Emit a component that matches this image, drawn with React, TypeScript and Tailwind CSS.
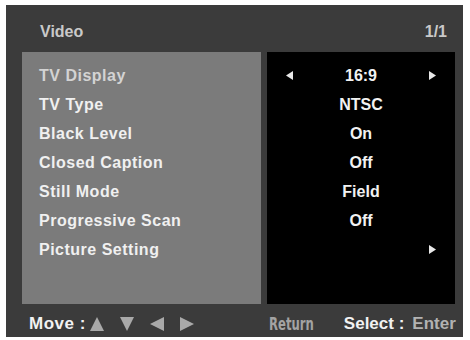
import React from 'react';

const rows = [
  { label: "TV Display", value: "16:9", left: true, right: true, dim: true },
  { label: "TV Type", value: "NTSC" },
  { label: "Black Level", value: "On" },
  { label: "Closed Caption", value: "Off" },
  { label: "Still Mode", value: "Field" },
  { label: "Progressive Scan", value: "Off" },
  { label: "Picture Setting", value: "", right: true },
];

const SmallArrow = ({ dir, show = true }: { dir: "left" | "right"; show?: boolean }) => (
  <svg width="7" height="9" viewBox="0 0 7 9" className={show ? "" : "invisible"}>
    {dir === "left" ? <polygon points="7,0 7,9 0,4.5" fill="#e8e8e8" /> : <polygon points="0,0 0,9 7,4.5" fill="#e8e8e8" />}
  </svg>
);

const NavTri = ({ dir }: { dir: "up" | "down" | "left" | "right" }) => {
  const pts = {
    up: "7,0 14,14 0,14",
    down: "0,0 14,0 7,14",
    left: "14,0 14,14 0,7",
    right: "0,0 14,7 0,14",
  }[dir];
  return (
    <svg width="14" height="14" viewBox="0 0 14 14">
      <polygon points={pts} fill="#a9a9a9" />
    </svg>
  );
};

export default function App() {
  return (
    <div className="w-[470px] h-[340px] bg-white pt-[5px] pl-[6px] font-['Liberation_Sans',Arial,sans-serif] font-bold">
      <div className="w-[457px] h-[332px] bg-[#3b3b3b] flex flex-col">
        {/* header */}
        <div className="h-[47px] flex items-center justify-between pl-[34px] pr-[16px] pt-[6px] text-[16px] text-[#c9c9c9]">
          <span>Video</span>
          <span>1/1</span>
        </div>

        {/* panels */}
        <div className="flex gap-[6px] pl-[16px] h-[252px]">
          <div className="w-[239px] bg-[#7b7b7b] pt-[9px] pl-[17px]">
            {rows.map((r) => (
              <div
                key={r.label}
                className={`h-[29px] flex items-center text-[16px] tracking-[0.5px] whitespace-nowrap ${r.dim ? "text-[#d3d3d3]" : "text-[#f0f0f0]"}`}
              >
                {r.label}
              </div>
            ))}
          </div>
          <div className="w-[188px] bg-black pt-[9px]">
            {rows.map((r) => (
              <div key={r.label} className="h-[29px] flex items-center px-[19px] text-[16px] text-[#f2f2f2]">
                <SmallArrow dir="left" show={!!r.left} />
                <span className="flex-1 text-center">{r.value}</span>
                <SmallArrow dir="right" show={!!r.right} />
              </div>
            ))}
          </div>
        </div>

        {/* footer */}
        <div className="flex-1 flex items-center pt-[6px] pl-[23px] text-[17px] whitespace-nowrap">
          <span className="text-[#f2f2f2] tracking-[0.5px]">Move :</span>
          <div className="flex items-center gap-[16px] ml-[4px]">
            <NavTri dir="up" />
            <NavTri dir="down" />
            <NavTri dir="left" />
            <NavTri dir="right" />
          </div>
          <span className="w-[75px] ml-[75px] text-[#a3a3a3] text-[18px] font-['Liberation_Sans_Narrow','DejaVu_Sans_Condensed',sans-serif]">
            <span className="inline-block scale-x-[0.72] origin-left">Return</span>
          </span>
          <span className="text-[#f2f2f2]">Select :</span>
          <span className="ml-[8px] text-[#b2b2b2]">Enter</span>
        </div>
      </div>
    </div>
  );
}
